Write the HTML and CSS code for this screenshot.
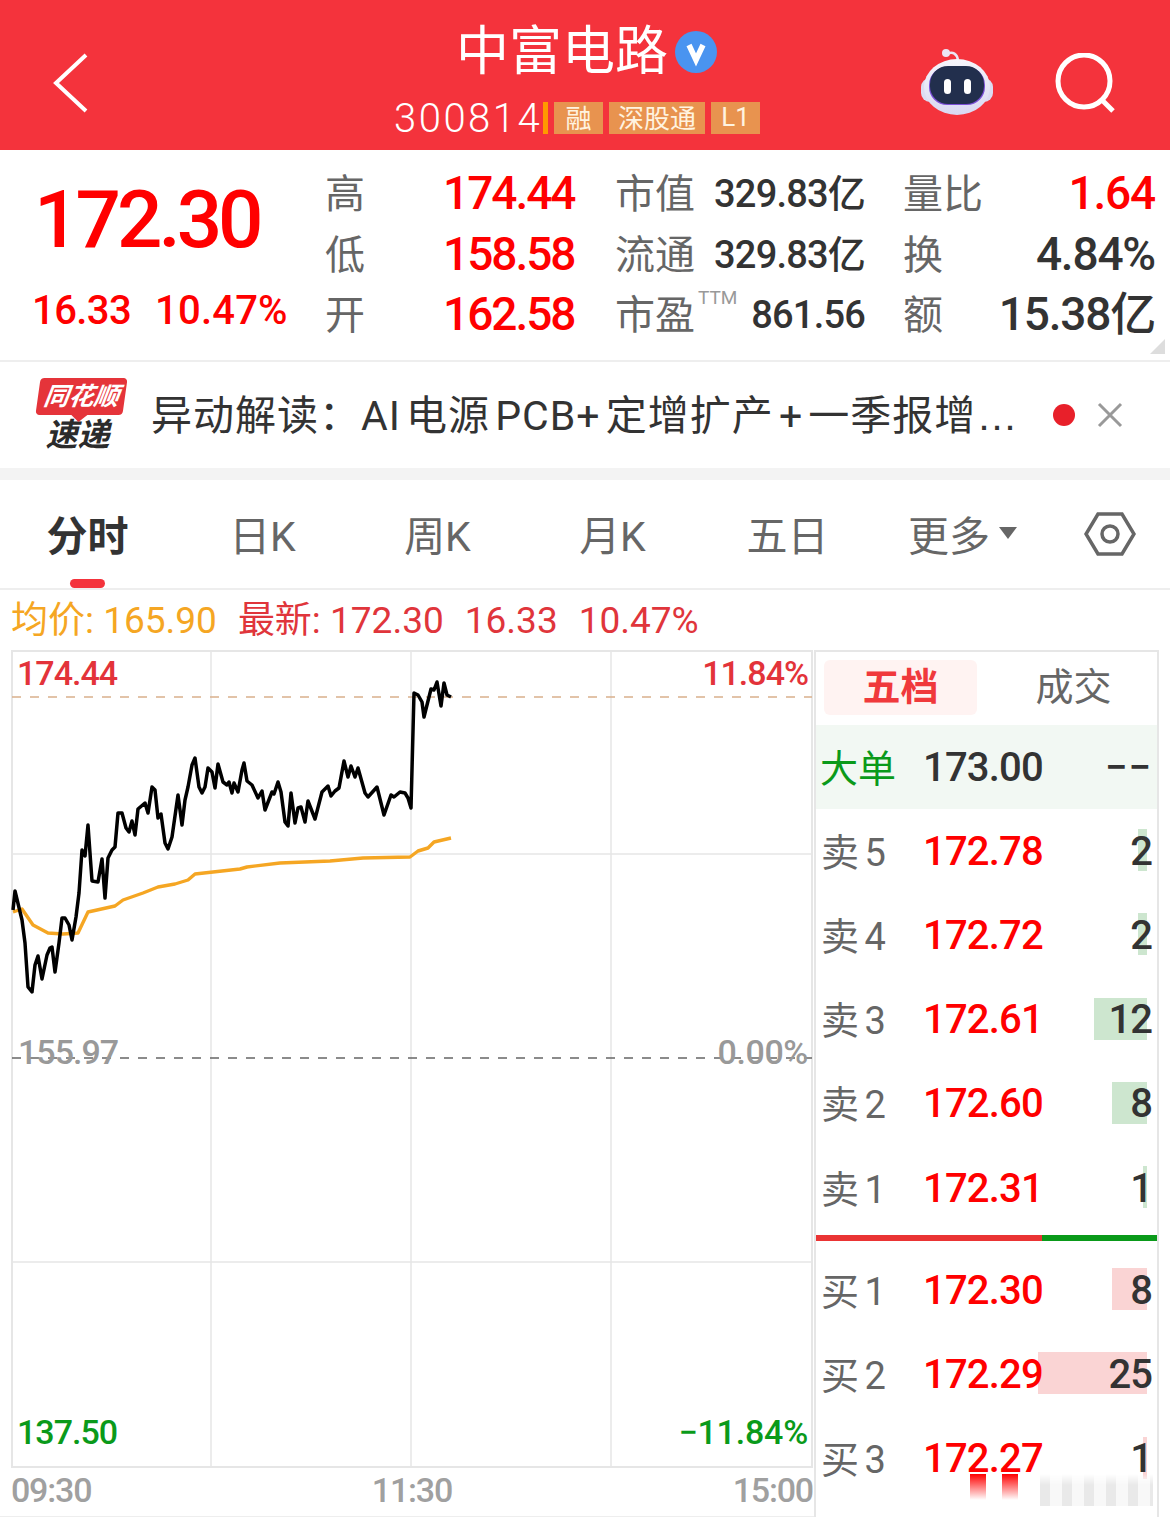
FILE: index.html
```html
<!DOCTYPE html>
<html lang="zh-CN">
<head>
    <meta charset="UTF-8">
    <meta name="viewport" content="width=device-width, initial-scale=1.0">
    <title>中富电路 300814</title>
    <link rel="stylesheet" href="styles.css">
</head>
<body>
    <header class="top-bar">
        <div class="top-left">
            <svg class="back-icon" width="36" height="60" viewBox="0 0 36 60"><path d="M33 2 L3 30 L33 58" fill="none" stroke="#fff" stroke-width="4"/></svg>
        </div>
        <div class="top-center">
            <div class="stock-name">
                <span>中富电路</span>
                <svg width="42" height="42" viewBox="0 0 42 42"><circle cx="21" cy="21" r="21" fill="#4a94f0"/><path d="M14 14 L21 29 L28 14" fill="none" stroke="#fff" stroke-width="5.5"/></svg>
            </div>
            <div class="stock-code">
                <span class="code-num">300814</span>
                <i class="code-mark"></i>
                <span class="tag tag-one">融</span>
                <span class="tag tag-three">深股通</span>
                <span class="tag tag-one">L1</span>
            </div>
        </div>
        <div class="top-right">
            <svg class="robot" width="76" height="68" viewBox="0 0 76 68">
                <defs>
                    <linearGradient id="shell" x1="0" y1="0" x2="0" y2="1"><stop offset="0" stop-color="#f6f5fb"/><stop offset="1" stop-color="#d9d8f2"/></linearGradient>
                </defs>
                <path d="M28 6 C34 3 38 6 39 12" fill="none" stroke="#ece6f4" stroke-width="2.5"/>
                <circle cx="27" cy="5" r="4" fill="#ece6f4"/>
                <rect x="2" y="30" width="72" height="24" rx="9" fill="#dcdcf2"/>
                <ellipse cx="38" cy="39" rx="33" ry="28" fill="url(#shell)"/>
                <rect x="10" y="19" width="56" height="38" rx="18" fill="#7b4fd6"/>
                <rect x="11" y="18" width="54" height="38" rx="18" fill="#222f4d"/>
                <rect x="25" y="31" width="7" height="15" rx="3.5" fill="#fff"/>
                <rect x="45" y="31" width="7" height="15" rx="3.5" fill="#fff"/>
            </svg>
            <svg class="search-icon" width="62" height="62" viewBox="0 0 62 62"><circle cx="29" cy="28" r="26" fill="none" stroke="#fff" stroke-width="5"/><path d="M47 47 L58 58" stroke="#fff" stroke-width="5"/></svg>
        </div>
    </header>

    <section class="quote">
        <div class="price-box">
            <div class="last-price">172.30</div>
            <div class="change">
                <span>16.33</span>
                <span>10.47%</span>
            </div>
        </div>
        <div class="hilo">
            <span class="lbl">高</span><span class="hilo-val">174.44</span>
            <span class="lbl">低</span><span class="hilo-val">158.58</span>
            <span class="lbl">开</span><span class="hilo-val">162.58</span>
        </div>
        <div class="stats">
            <span class="lbl">市值</span><span class="stat-val">329.83亿</span>
            <span class="lbl">流通</span><span class="stat-val">329.83亿</span>
            <span class="lbl pe">市盈<sup class="ttm">TTM</sup></span><span class="stat-val">861.56</span>
        </div>
        <div class="stats2">
            <span class="lbl">量比</span><span class="stat2-val up">1.64</span>
            <span class="lbl">换</span><span class="stat2-val">4.84%</span>
            <span class="lbl">额</span><span class="stat2-val">15.38亿</span>
        </div>
        <i class="corner"></i>
    </section>

    <section class="news">
        <div class="news-logo">
            <div class="logo-top"><span>同花顺</span></div>
            <div class="logo-bottom">速递</div>
        </div>
        <div class="news-text">异动解读：AI 电源 PCB+ 定增扩产 + 一季报增<span class="more">…</span></div>
        <i class="news-dot"></i>
        <svg class="news-close" width="26" height="26" viewBox="0 0 26 26"><path d="M2 2 L24 24 M24 2 L2 24" stroke="#999" stroke-width="3"/></svg>
    </section>

    <nav class="tabs">
        <a class="tab active">分时</a>
        <a class="tab">日K</a>
        <a class="tab">周K</a>
        <a class="tab">月K</a>
        <a class="tab">五日</a>
        <a class="tab">更多<i class="caret"></i></a>
        <svg class="hex" width="52" height="46" viewBox="0 0 52 46"><path d="M14 3 H38 L50 23 L38 43 H14 L2 23 Z" fill="none" stroke="#666" stroke-width="3.5"/><circle cx="26" cy="23" r="8" fill="none" stroke="#666" stroke-width="3.5"/></svg>
    </nav>

    <div class="legend">
        <span class="avg">均价: 165.90</span>
        <span class="latest">最新: 172.30</span>
        <span class="latest">16.33</span>
        <span class="latest">10.47%</span>
    </div>

    <main class="body-row">
        <div class="chart-col">
            <div class="chart">
                <svg width="816" height="818" viewBox="0 650 816 818">
                    <rect x="12" y="651" width="800" height="816" fill="none" stroke="#e6e6e6" stroke-width="2"/>
                    <path d="M211 651 V1467 M411 651 V1467 M611 651 V1467 M12 854 H812 M12 1262 H812" stroke="#e6e6e6" stroke-width="1.5" fill="none"/>
                    <path d="M12 697 H812" stroke="#d9b08c" stroke-width="1.5" stroke-dasharray="9 9" fill="none"/>
                    <path d="M12 1058 H812" stroke="#666" stroke-width="1.5" stroke-dasharray="9 9" fill="none"/>
                    <polyline class="line-avg" points="13,912 22,909 33,925 48,933 63,934 78,933 88,912 115,906 123,900 143,893 158,887 175,884 188,880 195,874 213,872 240,869 247,867 280,863 330,861 363,858 410,857 418,851 428,848 434,842 451,838"/>
                    <polyline class="line-price" points="13,910 15,891 22,920 25,943 28,987 32,992 35,965 38,956 42,979 47,955 50,948 52,947 55,972 59,943 62,918 65,918 69,925 72,940 76,917 79,893 82,850 85,856 88,825 92,881 98,882 102,859 105,898 108,858 112,850 115,847 118,813 122,813 126,828 129,832 132,821 135,835 138,809 145,803 148,813 152,787 155,790 158,818 161,814 165,843 168,849 172,837 178,795 182,825 185,800 188,787 192,765 195,758 199,787 202,793 205,787 208,768 212,772 215,788 218,764 223,782 227,785 229,782 232,793 234,783 238,792 242,770 244,763 247,781 252,785 258,798 262,791 265,810 272,792 274,794 278,782 281,792 285,822 288,826 291,793 295,823 298,808 301,807 305,822 308,801 315,819 322,792 328,786 331,796 335,791 339,788 344,761 348,777 351,766 355,777 358,768 365,793 368,797 377,787 384,815 391,795 394,797 400,792 405,793 408,798 411,808 414,693 418,695 422,702 424,717 431,689 434,690 437,682 441,706 444,683 447,695 451,697"/>
                </svg>
                <span class="axis axis-tl">174.44</span>
                <span class="axis axis-tr">11.84%</span>
                <span class="axis axis-ml">155.97</span>
                <span class="axis axis-mr">0.00%</span>
                <span class="axis axis-bl">137.50</span>
                <span class="axis axis-br">−11.84%</span>
            </div>
            <div class="times">
                <span>09:30</span>
                <span>11:30</span>
                <span>15:00</span>
            </div>
        </div>

        <aside class="book">
            <div class="book-tabs">
                <span class="book-tab on">五档</span>
                <span class="book-tab">成交</span>
            </div>
            <div class="row big">
                <span class="row-lbl green">大单</span>
                <span class="row-price">173.00</span>
                <span class="row-qty">−−</span>
            </div>
            <div class="row"><span class="row-lbl">卖 5</span><span class="row-price up">172.78</span><i class="bar sell" style="width:9px"></i><span class="row-qty">2</span></div>
            <div class="row"><span class="row-lbl">卖 4</span><span class="row-price up">172.72</span><i class="bar sell" style="width:9px"></i><span class="row-qty">2</span></div>
            <div class="row"><span class="row-lbl">卖 3</span><span class="row-price up">172.61</span><i class="bar sell" style="width:53px"></i><span class="row-qty">12</span></div>
            <div class="row"><span class="row-lbl">卖 2</span><span class="row-price up">172.60</span><i class="bar sell" style="width:35px"></i><span class="row-qty">8</span></div>
            <div class="row"><span class="row-lbl">卖 1</span><span class="row-price up">172.31</span><i class="bar sell" style="width:4px"></i><span class="row-qty">1</span></div>
            <div class="split">
                <i class="split-red"></i>
                <i class="split-green"></i>
            </div>
            <div class="row"><span class="row-lbl">买 1</span><span class="row-price up">172.30</span><i class="bar buy" style="width:35px"></i><span class="row-qty">8</span></div>
            <div class="row"><span class="row-lbl">买 2</span><span class="row-price up">172.29</span><i class="bar buy" style="width:109px"></i><span class="row-qty">25</span></div>
            <div class="row"><span class="row-lbl">买 3</span><span class="row-price up">172.27</span><i class="bar buy" style="width:4px"></i><span class="row-qty">1</span></div>
            <i class="fade"></i>
        </aside>
    </main>
</body>
</html>
```

FILE: styles.css
```css
body {
    margin: 0;
    width: 1170px;
    height: 1517px;
    overflow: hidden;
    background-color: #fff;
    color: #333;
    font-family: Roboto, 'Noto Sans CJK SC', sans-serif;
}
i {
    display: block;
}

/* top bar */
.top-bar {
    display: flex;
    height: 150px;
    background-color: #f4333c;
    color: #fff;
}
.top-left {
    width: 380px;
    padding: 53px 0 0 53px;
    box-sizing: border-box;
}
.top-center {
    width: 400px;
    padding-top: 26px;
    box-sizing: border-box;
}
.stock-name {
    display: flex;
    align-items: center;
    height: 52px;
    padding-left: 76px;
    font-size: 53px;
    line-height: 52px;
}
.stock-name svg {
    margin-left: 7px;
}
.stock-code {
    display: flex;
    align-items: center;
    height: 32px;
    margin-top: 24px;
    padding-left: 14px;
}
.code-num {
    font-size: 40px;
    font-weight: 300;
    letter-spacing: 2.5px;
}
.code-mark {
    width: 5px;
    height: 32px;
    margin: 0 6px 0 1px;
    background-color: #f90;
}
.tag {
    display: flex;
    align-items: center;
    justify-content: center;
    height: 32px;
    padding-bottom: 3px;
    box-sizing: border-box;
    margin-right: 6px;
    background-color: #e8934f;
    color: #fff3e0;
    font-size: 26px;
}
.tag-one {
    width: 49px;
}
.tag-three {
    width: 96px;
}
.top-right {
    display: flex;
    align-items: flex-start;
    padding-left: 139px;
}
.robot {
    margin-top: 48px;
}
.search-icon {
    margin: 53px 0 0 60px;
}

/* quote block */
.quote {
    position: relative;
    display: flex;
    height: 212px;
    padding-top: 15px;
    box-sizing: border-box;
    border-bottom: 2px solid #eee;
}
.price-box {
    width: 325px;
    flex: none;
}
.last-price {
    margin-left: 34px;
    color: #f00;
    font-size: 80px;
    font-weight: 500;
    line-height: 80px;
    letter-spacing: -4px;
    height: 122px;
    padding-top: 15px;
    box-sizing: border-box;
}
.change {
    display: flex;
    gap: 24px;
    margin-left: 32px;
    color: #f00;
    font-size: 40px;
    font-weight: 500;
    line-height: 48px;
    letter-spacing: -0.6px;
}
.change span + span {
    letter-spacing: 0.2px;
}
.lbl {
    color: #666;
    font-size: 40px;
    line-height: 60.5px;
    white-space: nowrap;
}
.hilo {
    display: grid;
    grid-template-columns: 118px 130px;
    grid-auto-rows: 60.5px;
    width: 290px;
    flex: none;
}
.hilo-val {
    color: #f00;
    font-size: 46px;
    font-weight: 500;
    line-height: 56px;
    letter-spacing: -2px;
    text-align: right;
    white-space: nowrap;
}
.stats {
    display: grid;
    grid-template-columns: 96px 154px;
    grid-auto-rows: 60.5px;
    width: 288px;
    flex: none;
}
.pe {
    position: relative;
}
.ttm {
    position: absolute;
    left: 83px;
    top: 0;
    font-size: 19px;
    line-height: 24px;
    color: #999;
}
.stat-val {
    font-size: 38px;
    font-weight: 500;
    line-height: 58px;
    letter-spacing: -0.8px;
    text-align: right;
    white-space: nowrap;
}
.stats2 {
    display: grid;
    grid-template-columns: 90px 162px;
    grid-auto-rows: 60.5px;
    flex: none;
}
.stat2-val {
    font-size: 46px;
    font-weight: 500;
    line-height: 56px;
    letter-spacing: -1.2px;
    text-align: right;
    white-space: nowrap;
}
.up {
    color: #f00;
}
.corner {
    position: absolute;
    right: 5px;
    bottom: 6px;
    width: 0;
    height: 0;
    border-left: 15px solid transparent;
    border-bottom: 15px solid #ddd;
}

/* news strip */
.news {
    display: flex;
    align-items: center;
    height: 106px;
    border-bottom: 12px solid #f3f3f3;
}
.news-logo {
    width: 87px;
    margin-left: 38px;
    flex: none;
    text-align: center;
}
.logo-top {
    position: relative;
    height: 37px;
    background-color: #e5343a;
    border-radius: 4px;
    transform: skewX(-8deg);
    color: #fff;
    font-size: 25px;
    font-weight: 700;
    font-style: italic;
    line-height: 37px;
    white-space: nowrap;
}
.logo-top::after {
    content: '';
    position: absolute;
    left: 36px;
    bottom: -7px;
    border-left: 8px solid transparent;
    border-right: 8px solid transparent;
    border-top: 7px solid #e5343a;
}
.logo-bottom {
    margin-top: 2px;
    padding-right: 8px;
    color: #2b2b2b;
    font-size: 32px;
    font-weight: 700;
    font-style: italic;
    line-height: 36px;
}
.news-text {
    width: 879px;
    margin: -6px 0 0 26px;
    flex: none;
    color: #333;
    font-size: 41px;
    letter-spacing: 1px;
    word-spacing: -6px;
    white-space: nowrap;
}
.more {
    font-family: 'Liberation Sans', sans-serif;
}
.news-dot {
    width: 22px;
    height: 22px;
    margin-left: 23px;
    flex: none;
    border-radius: 50%;
    background-color: #e8202a;
}
.news-close {
    margin-left: 22px;
    flex: none;
}

/* period tabs */
.tabs {
    position: relative;
    display: flex;
    height: 110px;
    box-sizing: border-box;
    border-bottom: 2px solid #eee;
}
.tab {
    position: relative;
    display: flex;
    justify-content: center;
    align-items: center;
    width: 175px;
    height: 108px;
    padding-bottom: 3px;
    box-sizing: border-box;
    color: #666;
    font-size: 41px;
}
.tab.active {
    color: #333;
    font-weight: 700;
}
.tab.active::after {
    content: '';
    position: absolute;
    left: 70px;
    bottom: 0;
    width: 35px;
    height: 9px;
    border-radius: 5px;
    background-color: #f4333c;
}
.caret {
    width: 0;
    height: 0;
    margin-left: 9px;
    border-left: 9px solid transparent;
    border-right: 9px solid transparent;
    border-top: 12px solid #666;
}
.hex {
    margin: 31px 0 0 34px;
}

/* legend line */
.legend {
    display: flex;
    align-items: baseline;
    gap: 21px;
    height: 60px;
    padding-left: 11px;
    font-size: 37px;
    line-height: 62px;
    white-space: nowrap;
}
.avg {
    color: #f5a623;
}
.latest {
    color: #e0353b;
}

/* chart */
.body-row {
    display: flex;
}
.chart-col {
    width: 816px;
    flex: none;
}
.chart {
    position: relative;
    height: 818px;
}
.chart svg {
    display: block;
}
.line-price {
    fill: none;
    stroke: #000;
    stroke-width: 3.5;
    stroke-linejoin: round;
}
.line-avg {
    fill: none;
    stroke: #f5a623;
    stroke-width: 3.4;
    stroke-linejoin: round;
}
.axis {
    position: absolute;
    font-size: 34px;
    line-height: 40px;
    font-weight: 500;
    letter-spacing: -1px;
}
.axis-tl {
    left: 17px;
    top: 3px;
    color: #e3333a;
}
.axis-tr {
    right: 8px;
    top: 3px;
    color: #e3333a;
}
.axis-ml {
    left: 18px;
    top: 382px;
    color: #999;
}
.axis-mr {
    right: 8px;
    top: 382px;
    color: #999;
    letter-spacing: -0.4px;
}
.axis-bl {
    left: 17px;
    top: 762px;
    color: #0a9a1a;
}
.axis-br {
    right: 8px;
    top: 762px;
    color: #0a9a1a;
    letter-spacing: -0.2px;
}
.times {
    display: flex;
    justify-content: space-between;
    height: 48px;
    padding: 0 3px 0 11px;
    border-bottom: 2px solid #eee;
    color: #a0a0a0;
    font-size: 34px;
    font-weight: 500;
    letter-spacing: -1.2px;
    line-height: 44px;
}

/* order book */
.book {
    position: relative;
    width: 341px;
    height: 866px;
    flex: none;
    border-top: 2px solid #e6e6e6;
    border-right: 2px solid #e6e6e6;
    box-shadow: -2px 0 #e6e6e6;
}
.book-tabs {
    display: flex;
    height: 73px;
    padding: 8px 0 0 8px;
    box-sizing: border-box;
    font-size: 38px;
    color: #666;
}
.book-tab {
    width: 153px;
    height: 55px;
    flex: none;
    line-height: 55px;
    text-align: center;
}
.book-tab + .book-tab {
    margin-left: 20px;
}
.book-tab.on {
    border-radius: 6px;
    background-color: #fff3f2;
    color: #f0393c;
    font-weight: 700;
}
.row {
    position: relative;
    display: flex;
    align-items: center;
    height: 84.2px;
    padding: 0 5px 0 5px;
}
.row.big {
    background-color: #f2f8f3;
    padding-left: 4px;
}
.row.big .row-qty {
    letter-spacing: 1px;
}
.row-lbl {
    width: 102px;
    padding-bottom: 4px;
    flex: none;
    color: #666;
    font-size: 38px;
    word-spacing: -4px;
    white-space: nowrap;
}
.green {
    color: #0a9a1a;
    width: 103px;
}
.row-price {
    position: relative;
    z-index: 1;
    font-size: 40px;
    font-weight: 500;
    letter-spacing: -0.8px;
}
.row-qty {
    position: relative;
    z-index: 1;
    margin-left: auto;
    font-size: 40px;
    font-weight: 500;
    letter-spacing: -1px;
}
.bar {
    position: absolute;
    right: 10px;
    top: 20px;
    height: 42px;
}
.sell {
    background-color: #cde6cf;
}
.buy {
    background-color: #fad4d4;
}
.split {
    display: flex;
    height: 6px;
    margin: 5px 0 7px;
}
.split-red {
    width: 226px;
    background-color: #ea3434;
}
.split-green {
    flex: 1;
    background-color: #0a9a1a;
}
/* blurred strip over the bottom edge of the last row */
.fade {
    position: absolute;
    left: 154px;
    right: 0;
    bottom: 12px;
    height: 32px;
    z-index: 2;
    background:
        linear-gradient(#f00, #fff0) 0 0 / 16px 26px no-repeat,
        linear-gradient(#f00, #fff0) 32px 0 / 16px 26px no-repeat,
        linear-gradient(#fff0, #fffffff0 45%);
}
.fade::after {
    content: '';
    position: absolute;
    left: 70px;
    right: 4px;
    top: 0;
    bottom: 0;
    background: repeating-linear-gradient(90deg, #e9e9e9 0 10px, #f8f8f8 10px 22px);
    -webkit-mask-image: linear-gradient(#0000, #000 35%);
    mask-image: linear-gradient(#0000, #000 35%);
}
```
